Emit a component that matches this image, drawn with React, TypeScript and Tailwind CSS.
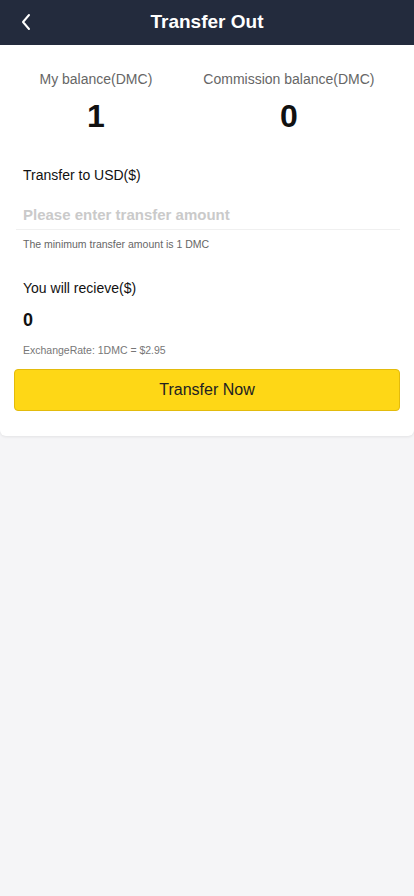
import React from "react"

function Header() {
  return (
    <div className="relative flex h-[45px] items-center justify-center bg-[#232b3d]">
      <button className="absolute left-[18px] top-[11px] flex h-[22px] w-[16px] items-center justify-center">
        <svg width="12" height="18" viewBox="0 0 12 18" fill="none">
          <path d="M9 2L3 9l6 7" stroke="#fff" strokeWidth="2" strokeLinecap="round" strokeLinejoin="round" />
        </svg>
      </button>
      <h1 className="text-[19px] font-bold text-white">Transfer Out</h1>
    </div>
  )
}

function Balance({ label, value }: { label: string; value: string }) {
  return (
    <div className="flex flex-col items-center">
      <p className="text-[14px] leading-[20px] text-[#666]">{label}</p>
      <p className="mt-[7px] text-[32px] font-bold leading-[40px] text-[#111]">{value}</p>
    </div>
  )
}

export default function App() {
  return (
    <div className="min-h-[896px] bg-[#f5f5f7] font-['Liberation_Sans',Arial,sans-serif]">
      <Header />
      <div className="rounded-b-[6px] bg-white px-[14px] pb-[25px] pt-[24px] shadow-[0_1px_3px_rgba(0,0,0,0.08)]">
        <div className="flex justify-around">
          <Balance label="My balance(DMC)" value="1" />
          <Balance label="Commission balance(DMC)" value="0" />
        </div>

        <p className="mt-[29px] pl-[9px] text-[14px] leading-[20px] text-[#111]">Transfer to USD($)</p>
        <div className="mt-[14px] ml-[2px] border-b border-[#f0f0f0]">
          <input
            className="h-[30px] w-full bg-transparent pl-[7px] text-[15px] font-bold text-[#333] outline-none placeholder:text-[#cacaca]"
            placeholder="Please enter transfer amount"
          />
        </div>
        <p className="mt-[7px] pl-[9px] text-[10.5px] leading-[14px] text-[#666]">
          The minimum transfer amount is 1 DMC
        </p>

        <p className="mt-[27px] pl-[9px] text-[14px] leading-[20px] text-[#111]">You will recieve($)</p>
        <p className="mt-[10px] pl-[9px] text-[18px] font-bold leading-[24px] text-[#111]">0</p>
        <p className="mt-[11px] pl-[9px] text-[10.5px] leading-[14px] text-[#777]">
          ExchangeRate: 1DMC = $2.95
        </p>

        <button className="mt-[12px] flex h-[42px] w-full items-center justify-center rounded-[4px] border border-[#e3bb0c] bg-[#fed716] text-[16px] text-[#222]">
          Transfer Now
        </button>
      </div>
    </div>
  )
}
